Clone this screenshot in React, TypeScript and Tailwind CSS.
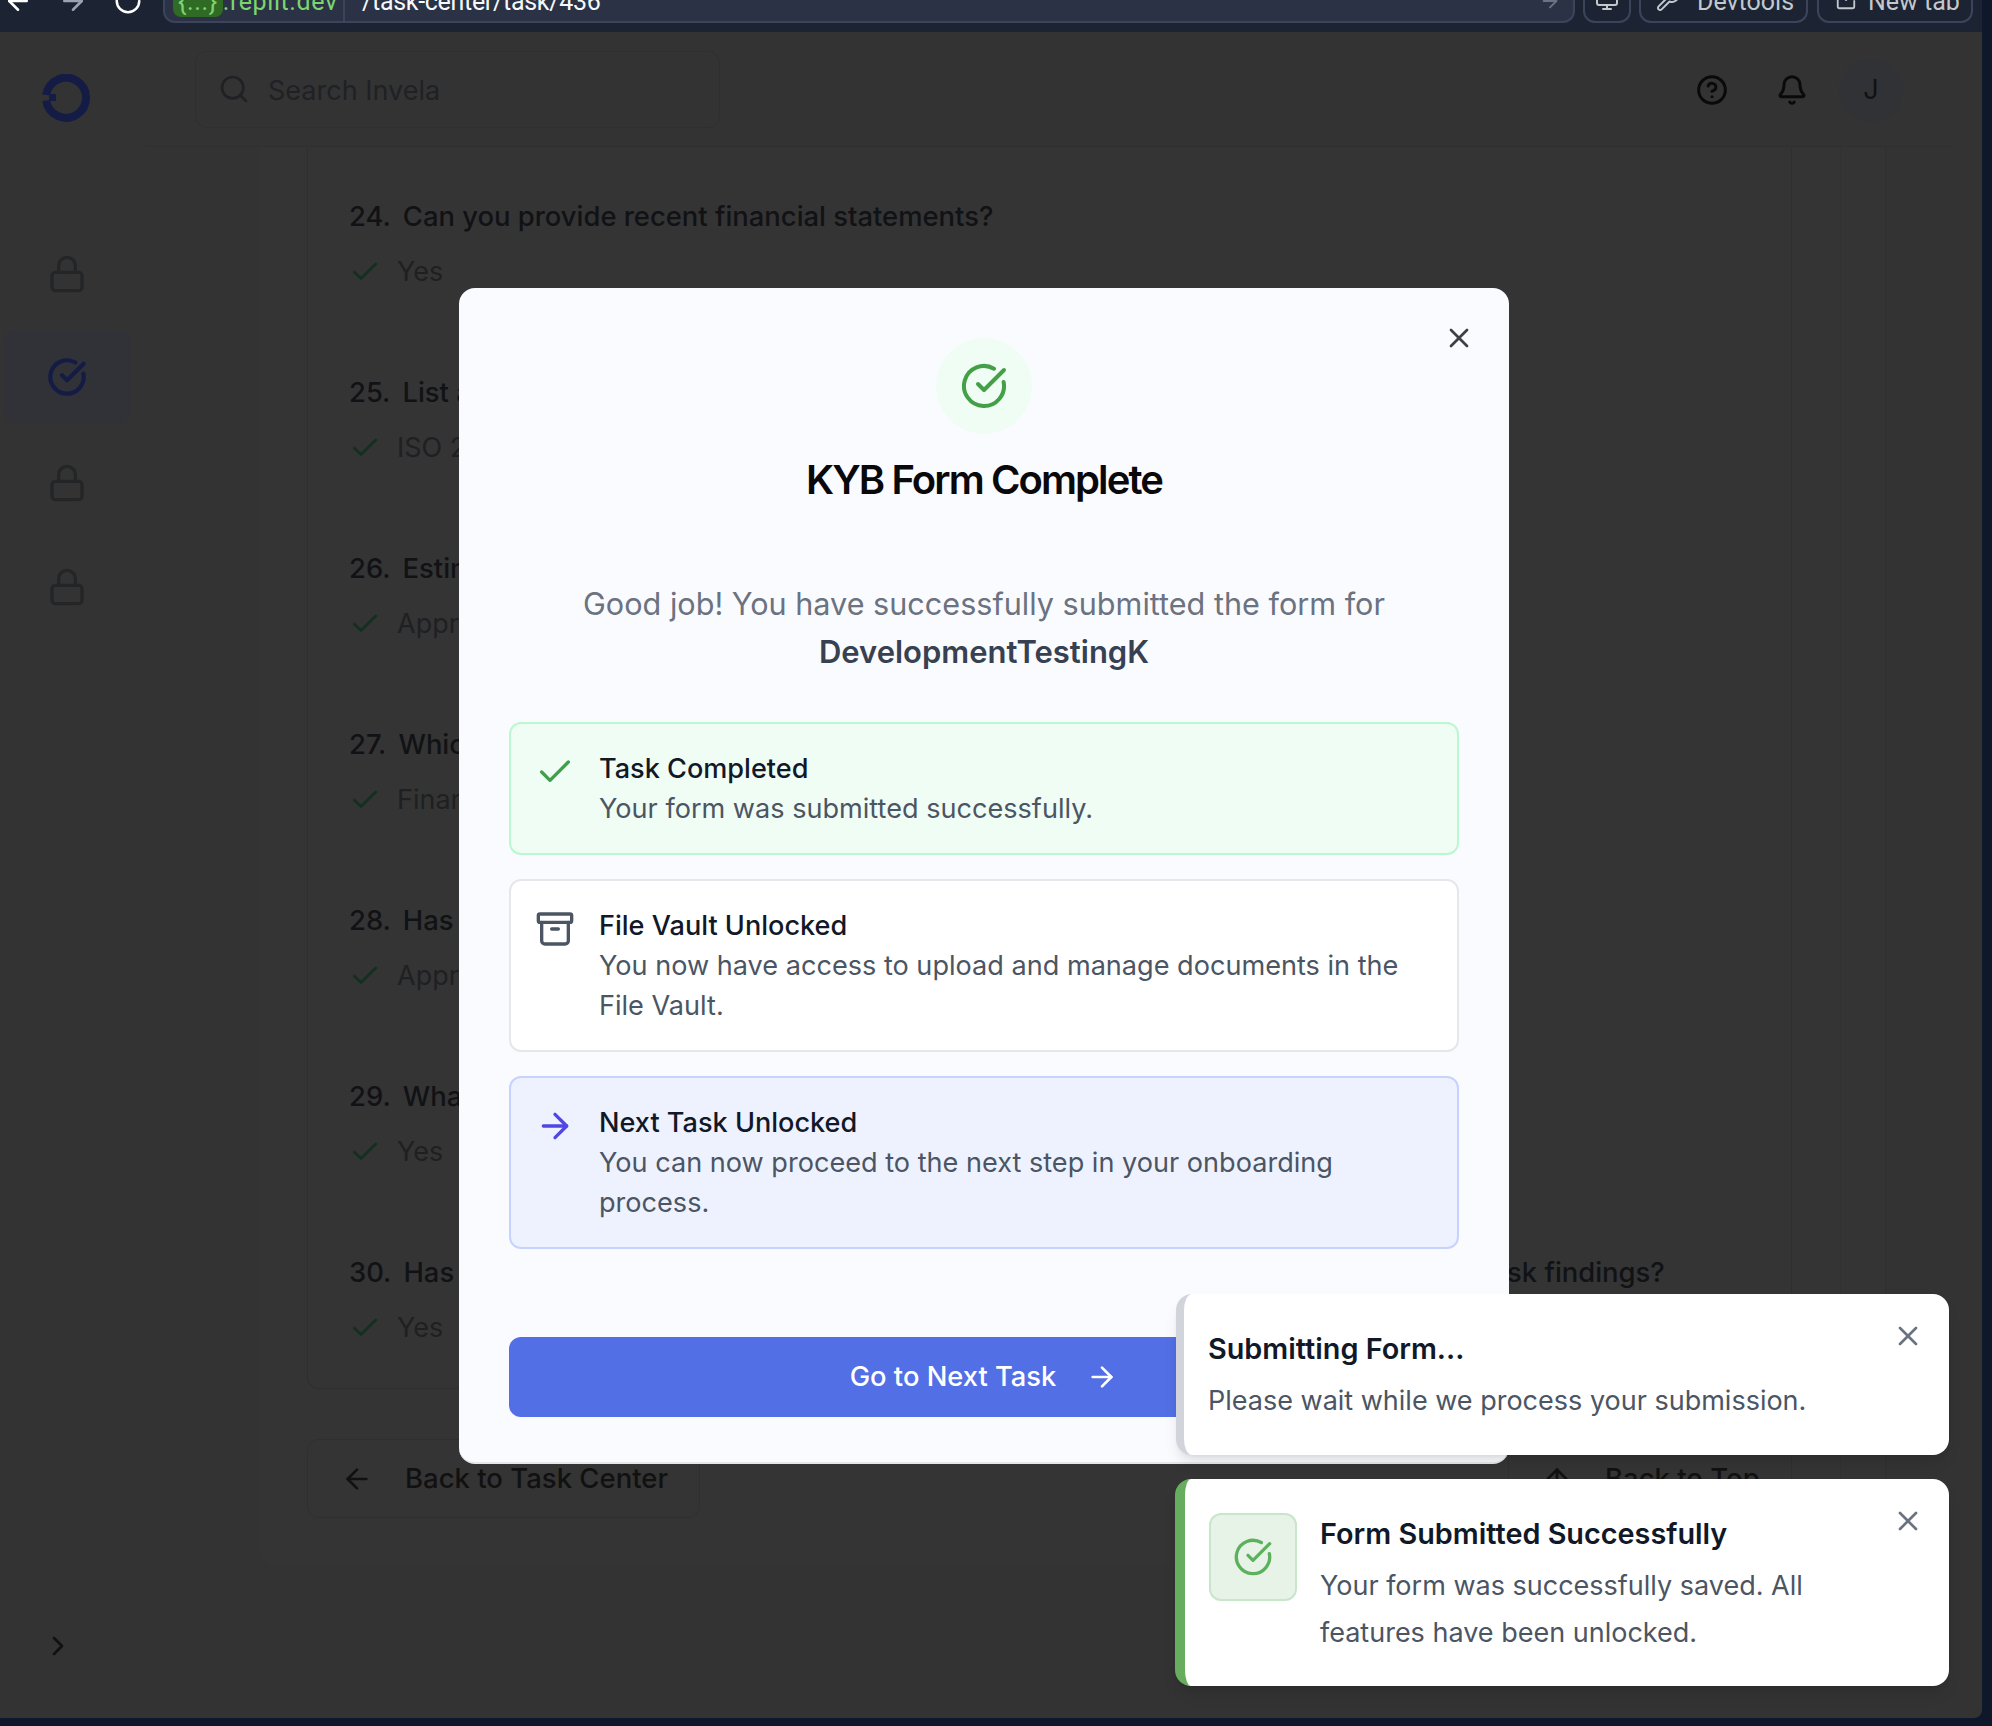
import React from "react";
import {
  Archive,
  ArrowLeft,
  ArrowRight,
  ArrowUp,
  Bell,
  Check,
  CheckCircle,
  ChevronRight,
  CircleHelp,
  Lock,
  Monitor,
  RotateCw,
  Search,
  SquareArrowOutUpRight,
  Wrench,
  X,
} from "lucide-react";

const questions = [
  { n: "24.", q: "Can you provide recent financial statements?", a: "Yes" },
  { n: "25.", q: "List any security certifications your company holds", a: "ISO 27001, SOC 2" },
  { n: "26.", q: "Estimate your annual revenue for the last fiscal year", a: "Approximately $2M" },
  { n: "27.", q: "Which regulators oversee your company", a: "Financial Conduct Authority" },
  { n: "28.", q: "Has your company been audited", a: "Approved" },
  { n: "29.", q: "What is your company policy", a: "Yes" },
  {
    n: "30.",
    q: "Has your company had any material security incidents, audit issues or outstanding risk findings?",
    a: "Yes",
  },
];

function LogoMark() {
  return (
    <svg width="48" height="48" viewBox="0 0 48 48" fill="none">
      <path d="M4.2 21A20 20 0 1 1 4.2 26.5" stroke="#141c45" strokeWidth="8" />
      <rect x="7" y="20" width="7" height="7" fill="#141c45" />
    </svg>
  );
}

function StatusCard({
  icon,
  title,
  body,
  className,
}: {
  icon: React.ReactNode;
  title: string;
  body: string;
  className: string;
}) {
  return (
    <div className={`flex gap-6 rounded-xl border-2 p-6 ${className}`}>
      <div className="mt-1 h-10 w-10 shrink-0">{icon}</div>
      <div className="pt-px text-[27.1px] leading-10">
        <div className="font-medium text-[#111827]">{title}</div>
        <div className="text-[#4b5563]">{body}</div>
      </div>
    </div>
  );
}

export default function App() {
  return (
    <div className="relative h-[1726px] w-[1992px] overflow-hidden bg-[#0f172a] font-['Inter',sans-serif] [font-optical-sizing:none]">
      {/* browser bar, scrolled off the top */}
      <div className="mr-[10px] flex h-8 items-start overflow-hidden bg-[#1c2333] font-['Roboto',sans-serif] text-[25px]">
        <div className="flex h-[23px] w-[163px] items-start gap-[25px] pl-[3px] text-white">
          <ArrowLeft size={30} className="-mt-[14px]" />
          <ArrowRight size={30} className="-mt-[14px] text-[#9da2b0]" />
          <RotateCw size={30} className="-mt-[14px]" />
        </div>
        <div className="flex h-[23px] w-[1412px] items-start rounded-b-xl border-2 border-t-0 border-[#3c445c] bg-[#2b3245]">
          <div className="flex h-[23px] w-[180px] shrink-0 items-start border-r-2 border-[#3c445c] pl-2 text-[#7dd56f]">
            <div className="-mt-[20px] flex h-[44px] items-center tracking-[0.6px]">
              <span className="rounded-lg bg-[#2f6b24] px-[5px] leading-[30px]">{"{...}"}</span>
              <span>.replit.dev</span>
            </div>
          </div>
          <div className="-mt-[20px] pl-[17px] leading-[44px] tracking-[-0.3px] text-[#f5f9fc]">/task-center/task/436</div>
          <ArrowRight size={22} className="-mt-[10px] ml-auto mr-[12px] text-[#6b7280]" />
        </div>
        <div className="ml-[8px] flex h-[23px] w-[48px] items-start justify-center rounded-b-xl border-2 border-t-0 border-[#3c445c]">
          <Monitor size={24} className="-mt-[12px] text-[#c2c8cc]" />
        </div>
        <div className="ml-[8px] flex h-[23px] w-[169px] items-start gap-[17px] rounded-b-xl border-2 border-t-0 border-[#3c445c] pl-[15px] text-[#c2c8cc]">
          <Wrench size={24} className="-mt-[12px]" />
          <span className="-mt-[20px] leading-[44px]">Devtools</span>
        </div>
        <div className="ml-[9px] flex h-[23px] w-[156px] items-start gap-[11px] rounded-b-xl border-2 border-t-0 border-[#3c445c] pl-[16px] text-[#c2c8cc]">
          <SquareArrowOutUpRight size={22} className="-mt-[11px]" />
          <span className="-mt-[20px] leading-[44px]">New tab</span>
        </div>
      </div>

      {/* dimmed page */}
      <div className="mr-[10px] flex h-[1686px] rounded-br-lg bg-[#333333]">
        <aside className="flex w-[145px] shrink-0 flex-col">
          <div className="h-[115px] pl-[42px] pt-[42px]">
            <LogoMark />
          </div>
          <div className="mt-[75px] flex w-[133px] flex-col items-center">
            <div className="flex h-[104px] items-center justify-center">
              <Lock size={40} className="text-[#232527]" />
            </div>
            <div className="mt-1 flex h-[94px] w-[127px] items-center justify-center rounded-xl bg-[#303238]">
              <CheckCircle size={40} strokeWidth={2.5} className="text-[#141c45]" />
            </div>
            <div className="flex h-[118px] items-center justify-center">
              <Lock size={40} className="text-[#232527]" />
            </div>
            <div className="flex h-[90px] items-center justify-center">
              <Lock size={40} className="text-[#232527]" />
            </div>
          </div>
          <div className="mb-[56px] mt-auto w-full pl-[42px]">
            <ChevronRight size={32} className="text-[#111111]" />
          </div>
        </aside>

        <div className="flex min-w-0 flex-1 flex-col">
          <header className="mr-[30px] flex h-[115px] shrink-0 items-center justify-between border-b border-[#2f2f2f] pr-[49px]">
            <div className="ml-[50px] flex h-[77px] w-[525px] items-center gap-[18px] rounded-xl border border-[#2f2f2f] pl-[22px] text-[27px] text-[#1f2124]">
              <Search size={32} className="text-[#1f2124]" />
              <span className="mt-1">Search Invela</span>
            </div>
            <div className="mt-[2px] flex items-center text-[#0a0a0a]">
              <CircleHelp size={32} strokeWidth={2.25} />
              <Bell size={32} strokeWidth={2.25} className="ml-[48px]" />
              <div className="ml-[31px] flex h-[64px] w-[64px] items-center justify-center rounded-full bg-[#313236] text-[27px] text-[#111111]">
                J
              </div>
            </div>
          </header>

          <main className="min-h-0 flex-1 overflow-hidden">
            <div className="ml-[115px] h-[1419px] w-[1626px] rounded-b-2xl border-r border-[#2f2f2f] bg-[#343434]">
              <div className="ml-[47px] w-[1534px] border-r border-[#313131]">
                <div className="w-[1485px] rounded-b-xl border border-t-0 border-[#2f2f2f] px-[41px] pb-[40px] pt-[49px]">
                  <div className="flex flex-col gap-[80px]">
                    {questions.map((item) => (
                      <div key={item.n}>
                        <div className="flex gap-[12px] text-[27.4px] font-medium leading-10 text-[#111215]">
                          <span>{item.n}</span>
                          <span>{item.q}</span>
                        </div>
                        <div className="mt-4 flex h-10 items-center gap-[16px] text-[27px] text-[#1e2022]">
                          <Check size={32} className="text-[#12301f]" />
                          <span>{item.a}</span>
                        </div>
                      </div>
                    ))}
                  </div>
                </div>
                <div className="mt-[50px] flex w-[1485px] justify-between pb-[48px]">
                  <div className="flex h-[79px] w-[393px] items-center gap-[32px] rounded-xl border border-[#2f2f2f] pl-[33px] text-[27.5px] font-medium text-[#111111]">
                    <ArrowLeft size={32} />
                    <span>Back to Task Center</span>
                  </div>
                  <div className="flex h-[79px] w-[284px] items-center gap-[32px] rounded-xl border border-[#2f2f2f] pl-[32px] text-[27.5px] font-medium text-[#111111]">
                    <ArrowUp size={32} />
                    <span>Back to Top</span>
                  </div>
                </div>
              </div>
            </div>
          </main>
        </div>
      </div>

      {/* modal */}
      <div className="absolute left-[459px] top-[288px] h-[1176px] w-[1050px] rounded-2xl border-b-2 border-[#e5e7eb] bg-[#fafbff] p-[50px]">
        <X size={32} className="absolute right-[34px] top-[34px] text-[#3f3f46]" />
        <div className="flex flex-col items-center">
          <div className="flex h-24 w-24 items-center justify-center rounded-full bg-[#f0fdf4]">
            <CheckCircle size={48} className="text-[#43a047]" />
          </div>
          <h2 className="mt-6 text-[40px] font-semibold leading-[44px] tracking-[-1.9px] text-[#09090b] [font-optical-sizing:auto]">
            KYB Form Complete
          </h2>
          <p className="mt-[78px] text-center text-[30.6px] leading-[48px] text-[#6b7280]">
            Good job! You have successfully submitted the form for
            <br />
            <span className="text-[31px] font-semibold text-[#374151]">DevelopmentTestingK</span>
          </p>
        </div>
        <div className="mt-[46px] flex flex-col gap-6">
          <StatusCard
            className="border-[#bbf7d0] bg-[#f0fdf4]"
            icon={<Check size={40} className="text-[#3f9f4a]" />}
            title="Task Completed"
            body="Your form was submitted successfully."
          />
          <StatusCard
            className="border-[#e5e7eb] bg-white"
            icon={<Archive size={40} className="text-[#4b5563]" />}
            title="File Vault Unlocked"
            body="You now have access to upload and manage documents in the File Vault."
          />
          <StatusCard
            className="border-[#c7d2fe] bg-[#eef2ff]"
            icon={<ArrowRight size={40} className="text-[#4f46e5]" />}
            title="Next Task Unlocked"
            body="You can now proceed to the next step in your onboarding process."
          />
        </div>
        <button className="mt-[88px] flex h-20 w-full items-center justify-center gap-[30px] rounded-xl bg-[#526fe5] text-[27.3px] font-medium text-white">
          Go to Next Task
          <ArrowRight size={32} />
        </button>
      </div>

      {/* toasts */}
      <div className="absolute left-[1176px] top-[1294px] h-[161px] w-[773px] rounded-2xl border-l-8 border-[#d1d5db] bg-white pl-6 pt-[35px] shadow-lg">
        <X size={32} className="absolute right-[25px] top-[26px] text-[#6b7280]" />
        <div className="text-[28.8px] font-semibold leading-10 text-[#111827]">Submitting Form...</div>
        <div className="mt-3 text-[27px] leading-10 text-[#4b5563]">
          Please wait while we process your submission.
        </div>
      </div>
      <div className="absolute left-[1175px] top-[1479px] flex h-[207px] w-[774px] gap-[23px] rounded-2xl border-l-[10px] border-[#66ad5e] bg-white pl-6 pt-[34px] shadow-lg">
        <X size={32} className="absolute right-[25px] top-[26px] text-[#6b7280]" />
        <div className="flex h-[88px] w-[88px] shrink-0 items-center justify-center rounded-xl border-2 border-[#c8e6c9] bg-[#e8f3e8]">
          <CheckCircle size={40} className="text-[#5cb25c]" />
        </div>
        <div className="mt-px w-[540px]">
          <div className="text-[28.8px] font-semibold leading-10 text-[#111827]">
            Form Submitted Successfully
          </div>
          <div className="mt-[8px] text-[27px] leading-[47px] text-[#4b5563]">
            Your form was successfully saved. All features have been unlocked.
          </div>
        </div>
      </div>
    </div>
  );
}
